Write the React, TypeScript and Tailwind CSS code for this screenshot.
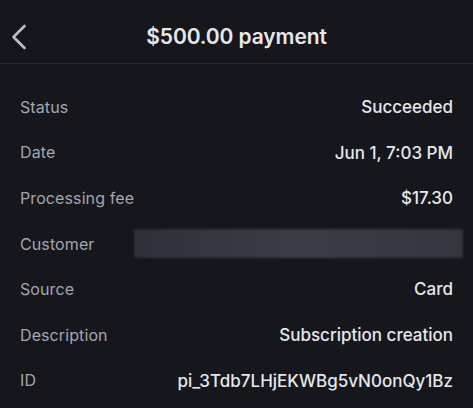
const rows = [
  { label: 'Status', value: 'Succeeded' },
  { label: 'Date', value: 'Jun 1, 7:03 PM' },
  { label: 'Processing fee', value: '$17.30' },
  { label: 'Customer', value: null },
  { label: 'Source', value: 'Card' },
  { label: 'Description', value: 'Subscription creation' },
  { label: 'ID', value: 'pi_3Tdb7LHjEKWBg5vN0onQy1Bz' },
]

export default function App() {
  return (
    <div
      className="w-[473px] h-[408px] overflow-hidden bg-[#15171d] text-[#e4e5e9]"
      style={{ fontFamily: 'Inter, "Liberation Sans", sans-serif' }}
    >
      <header className="relative h-[64px] pt-[10px] flex items-center justify-center border-b border-[#262830]">
        <button className="absolute left-[11px] top-[24px] text-[#b9bcc4]">
          <svg width="16" height="26" viewBox="0 0 16 26" fill="none">
            <polyline
              points="13.5,2 2.5,13 13.5,24"
              stroke="currentColor"
              strokeWidth="2.6"
              strokeLinecap="round"
              strokeLinejoin="round"
            />
          </svg>
        </button>
        <h1 className="text-[21px] font-semibold tracking-[-0.1px] text-[#e6e7eb]">$500.00 payment</h1>
      </header>

      <div className="pt-[20px] px-[20px]">
        {rows.map((row) => (
          <div key={row.label} className="h-[45.6px] flex items-center justify-between">
            <span className="text-[16px] tracking-[0.1px] text-[#a3a6ae]">{row.label}</span>
            {row.value ? (
              <span className="text-[17px] font-medium text-[#e6e7eb] translate-y-[1px]">{row.value}</span>
            ) : (
              <div className="w-[329px] h-[29px] mr-[-10px] rounded-[2px] bg-gradient-to-r from-[#2e3139] via-[#3a3d45] to-[#33363e] blur-[1px]" />
            )}
          </div>
        ))}
      </div>
    </div>
  )
}
